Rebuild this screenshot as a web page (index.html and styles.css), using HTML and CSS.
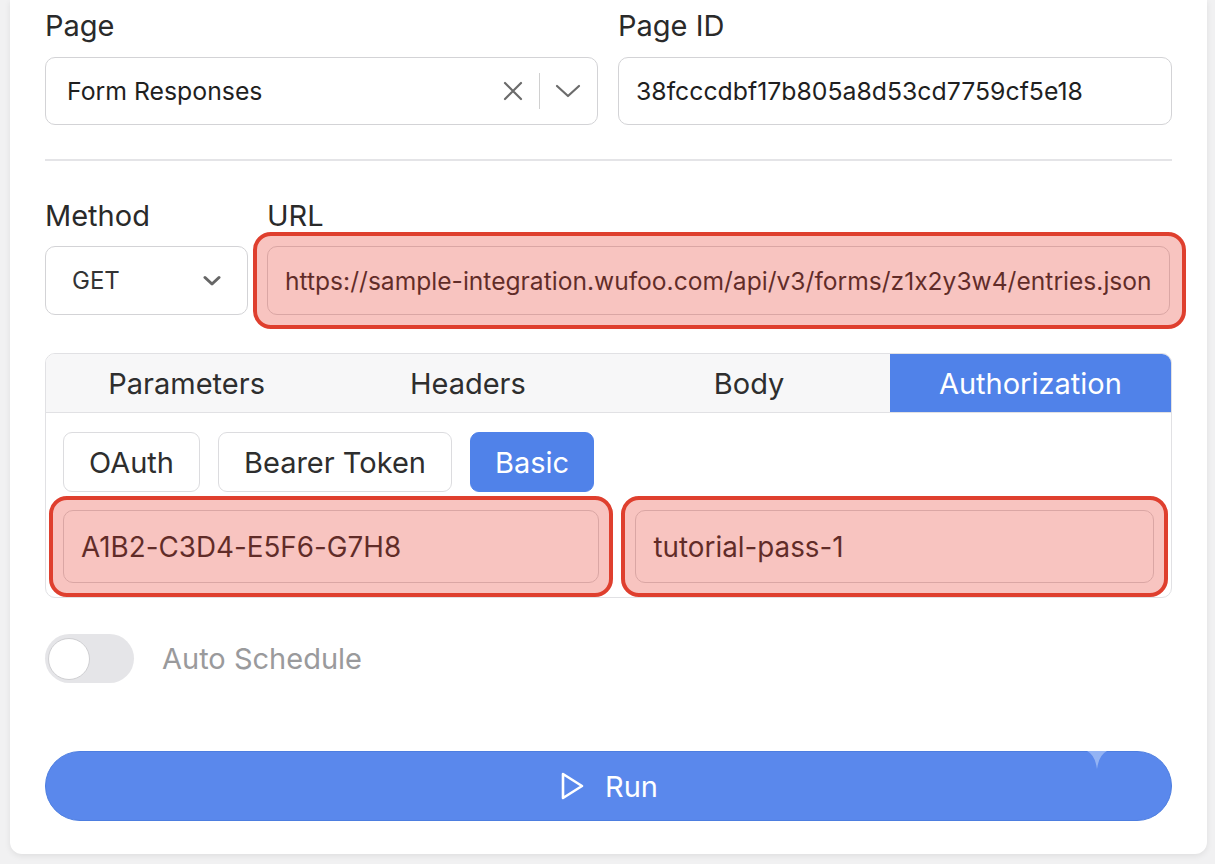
FILE: index.html
```html
<!DOCTYPE html>
<html lang="en">
<head>
<meta charset="utf-8">
<title>Request</title>
<link rel="stylesheet" href="styles.css">
</head>
<body>
<div class="card">
  <div class="row two">
    <div class="field">
      <div class="label">Page</div>
      <div class="control select">
        <span class="value">Form Responses</span>
        <span class="select-icons">
          <svg class="ico-x" width="22" height="22" viewBox="0 0 22 22"><path d="M3 3 L19 19 M19 3 L3 19" stroke="#6b6b6b" stroke-width="2.2" fill="none" stroke-linecap="round"/></svg>
          <span class="sep"></span>
          <svg class="ico-chev" width="26" height="16" viewBox="0 0 26 16"><path d="M2 3 L13 13 L24 3" stroke="#6b6b6b" stroke-width="2.2" fill="none" stroke-linecap="round" stroke-linejoin="round"/></svg>
        </span>
      </div>
    </div>
    <div class="field">
      <div class="label">Page ID</div>
      <div class="control id"><span class="value">38fcccdbf17b805a8d53cd7759cf5e18</span></div>
    </div>
  </div>

  <hr class="divider">

  <div class="row method-row">
    <div class="field method">
      <div class="label">Method</div>
      <div class="control select small">
        <span class="value">GET</span>
        <svg width="18" height="12" viewBox="0 0 18 12"><path d="M2 2.5 L9 9 L16 2.5" stroke="#666" stroke-width="3" fill="none" stroke-linecap="round" stroke-linejoin="round"/></svg>
      </div>
    </div>
    <div class="field url">
      <div class="label">URL</div>
      <div class="hl">
        <div class="control"><span class="value">https://sample-integration.wufoo.com/api/v3/forms/z1x2y3w4/entries.json</span></div>
      </div>
    </div>
  </div>

  <div class="tabs">
    <div class="tab-head">
      <div class="tab">Parameters</div>
      <div class="tab">Headers</div>
      <div class="tab">Body</div>
      <div class="tab active">Authorization</div>
    </div>
    <div class="tab-body">
      <div class="auth-types">
        <button class="btn">OAuth</button>
        <button class="btn">Bearer Token</button>
        <button class="btn primary">Basic</button>
      </div>
      <div class="creds">
        <div class="hl"><div class="control tall"><span class="value">A1B2-C3D4-E5F6-G7H8</span></div></div>
        <div class="hl"><div class="control tall"><span class="value">tutorial-pass-1</span></div></div>
      </div>
    </div>
  </div>

  <div class="toggle-row">
    <span class="toggle"><span class="knob"></span></span>
    <span class="toggle-label">Auto Schedule</span>
  </div>

  <div class="run-wrap">
    <button class="run">
      <svg width="26" height="30" viewBox="0 0 26 30"><path d="M4 3 L23 15 L4 27 Z" stroke="#fff" stroke-width="2.6" fill="none" stroke-linejoin="round"/></svg>
      <span>Run</span>
    </button>
    <svg class="pointer" width="20" height="18" viewBox="0 0 20 18"><path d="M0 0 H20 Q12 4 10 18 Q8 4 0 0 Z" fill="#93b3f4"/></svg>
  </div>
</div>
</body>
</html>
```

FILE: styles.css
```css
* { box-sizing: border-box; }
html, body { margin: 0; padding: 0; }
body {
  background: #f1f1f2;
  font-family: Inter, "Noto Sans", sans-serif;
  font-feature-settings: "calt" 0;
  color: #262626;
  height: 864px;
  overflow: hidden;
}
.card {
  margin-left: 10px;
  width: 1197px;
  background: #fff;
  border-radius: 0 0 12px 12px;
  box-shadow: 0 2px 6px rgba(0,0,0,0.08);
  padding: 10px 35px 33px 35px;
}
.row.two {
  display: grid;
  grid-template-columns: 553px 554px;
  gap: 20px;
}
.label {
  font-size: 29px;
  line-height: 32px;
  height: 32px;
  color: #2a2a2a;
  margin-bottom: 15px;
}
.control {
  height: 68px;
  border: 1.5px solid #d3d3d6;
  border-radius: 10px;
  background: #fff;
  display: flex;
  align-items: center;
  padding: 0 17px;
  font-size: 24.8px;
  color: #1f1f1f;
}
.control .value { white-space: nowrap; flex: 1; }
.select { padding-left: 21px; padding-right: 16px; }
.select-icons { display: flex; align-items: center; gap: 15px; }
.sep { width: 1.5px; height: 36px; background: #d0d0d0; }
.divider {
  border: 0;
  height: 2px;
  background: #e4e4e7;
  margin: 34px 0 39px 0;
}
.method-row {
  display: grid;
  grid-template-columns: 203px 1fr;
  gap: 19px;
}
.method-row .label { margin-bottom: 14px; }
.method-row .control { height: 69px; }
.select.small { padding-left: 26px; padding-right: 26px; font-size: 24px; color: #333; }
.url .control { margin-right: 2px; padding-left: 17px; font-size: 24.6px; }
.hl { position: relative; }
.hl::after {
  content: "";
  position: absolute;
  inset: -14px;
  border: 4.5px solid #df3f2e;
  border-radius: 18px;
  background: rgba(232, 70, 58, 0.32);
  pointer-events: none;
}
.tabs {
  margin-top: 38px;
  border: 1.5px solid #e1e1e4;
  border-radius: 10px;
  overflow: hidden;
}
.tab-head {
  display: grid;
  grid-template-columns: repeat(4, 1fr);
  height: 59px;
  background: #f7f7f8;
  border-bottom: 1.5px solid #e1e1e4;
}
.tab {
  display: flex;
  align-items: center;
  justify-content: center;
  font-size: 29px;
  color: #2e2e2e;
}
.tab.active { background: #5082e9; color: #fff; }
.tab-body { padding: 19px 17px 14px 17px; }
.auth-types { display: flex; gap: 18px; }
.btn {
  font-family: inherit;
  font-size: 29px;
  height: 60px;
  padding: 0 25px;
  border: 1.5px solid #dcdcdf;
  border-radius: 9px;
  background: #fff;
  color: #2e2e2e;
}
.btn.primary { background: #5082e9; border-color: #5082e9; color: #fff; padding: 0 24px; }
.creds {
  margin-top: 18px;
  display: grid;
  grid-template-columns: 537fr 519fr;
  gap: 36px;
}
.control.tall { height: 73px; padding-left: 17px; font-size: 27.8px; }
.toggle-row {
  display: flex;
  align-items: center;
  gap: 28px;
  margin-top: 36px;
}
.toggle {
  width: 89px;
  height: 49px;
  border-radius: 25px;
  background: #e5e5e8;
  display: flex;
  align-items: center;
  padding-left: 3px;
}
.knob {
  width: 42px;
  height: 42px;
  border-radius: 50%;
  background: #fff;
  border: 1.5px solid #cfcfd2;
}
.toggle-label { font-size: 29px; color: #9a9a9c; }
.run-wrap { position: relative; margin-top: 68px; }
.run {
  width: 100%;
  height: 70px;
  border-radius: 35px;
  border: 1px solid #4d7ee0;
  background: #5a88ec;
  color: #fff;
  font-family: inherit;
  font-size: 29px;
  display: flex;
  align-items: center;
  justify-content: center;
  gap: 20px;
}
.pointer { position: absolute; left: 1042px; top: 0; }
```
